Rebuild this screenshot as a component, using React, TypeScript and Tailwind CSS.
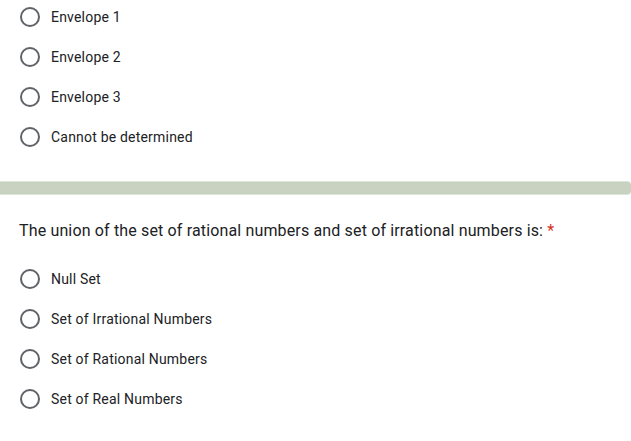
import React from "react";

function Option({ label }: { label: string }) {
  return (
    <div className="flex h-10 items-center">
      <div className="ml-[20px] h-5 w-5 shrink-0 rounded-full border-2 border-[#5f6368]" />
      <span className="ml-[11px] text-[14px] tracking-[0.2px] text-[#202124]">{label}</span>
    </div>
  );
}

export default function App() {
  return (
    <div className="h-[441px] w-[631px] overflow-hidden bg-white" style={{ fontFamily: "Roboto, 'Liberation Sans', sans-serif" }}>
      <div className="-mt-[3px]">
        <Option label="Envelope 1" />
        <Option label="Envelope 2" />
        <Option label="Envelope 3" />
        <Option label="Cannot be determined" />
      </div>
      <div className="mt-[24px] h-[14px] w-full rounded-r-[4px] border-y border-[#dde3d6] bg-[#c9d1c1]" />
      <div className="mt-[24px] pl-[19px] text-[16px] leading-6 tracking-[0.15px] text-[#202124]">
        The union of the set of rational numbers and set of irrational numbers is:{" "}
        <span className="text-[#d93025]">*</span>
      </div>
      <div className="mt-[16px]">
        <Option label="Null Set" />
        <Option label="Set of Irrational Numbers" />
        <Option label="Set of Rational Numbers" />
        <Option label="Set of Real Numbers" />
      </div>
    </div>
  );
}
